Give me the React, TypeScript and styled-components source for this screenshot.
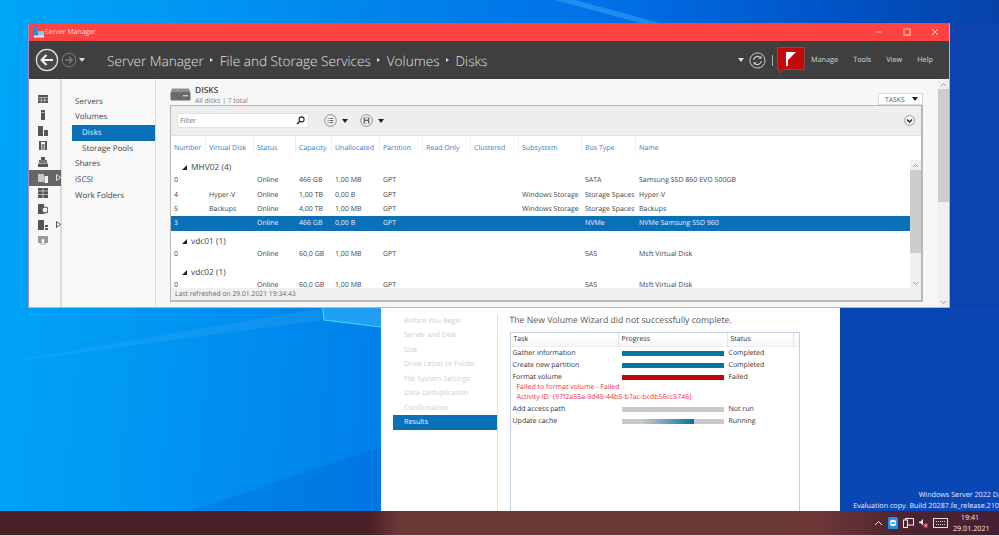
import React from "react";
import styled, { createGlobalStyle } from "styled-components";

const Global = createGlobalStyle`
  html, body { margin: 0; padding: 0; height: 100%; overflow: hidden; }
  #root { height: 100%; }
  * { box-sizing: border-box; text-rendering: geometricPrecision; }
`;

const Desktop = styled.div`
  position: relative;
  width: 999px;
  height: 536px;
  overflow: hidden;
  display: flex;
  flex-direction: column;
  font-family: "Open Sans", Roboto, sans-serif;
  font-size: 7.2px;
  color: #3c3c3c;
  background: linear-gradient(96deg, #00a6f7 0%, #0095f2 20%, #0082ea 38%, #0070e8 58%, #0052c4 80%, #0a3c9e 100%);
`;

const Wallpaper = styled.svg`
  position: absolute;
  left: 0;
  top: 0;
`;

const Spacer = styled.div`
  flex: 1;
`;

const Taskbar = styled.footer`
  height: 25px;
  background: linear-gradient(90deg, #4a2129 0%, #4a2029 37%, #6b3838 40%, #6e3838 82%, #4d2430 90%, #452033 100%);
  display: flex;
  align-items: center;
  justify-content: flex-end;
  position: relative;
  z-index: 2;
  border-bottom: 1px solid #d8d8d8;
`;

const Tray = styled.div`
  display: flex;
  align-items: center;
  gap: 5px;
  margin-right: 12px;
  color: #fff;
`;

const Clock = styled.div`
  width: 34px;
  padding-top: 1px;
  text-align: center;
  font-size: 7.2px;
  line-height: 11px;
  color: #f4eeee;
`;

const Watermark = styled.div`
  position: absolute;
  right: -31px;
  top: 490px;
  color: #e8f0ff;
  font-size: 7.2px;
  line-height: 11px;
  white-space: nowrap;
  text-align: right;
`;

const WizardWindow = styled.section`
  position: absolute;
  left: 381px;
  top: 308px;
  width: 459px;
  height: 203px;
  background: #fff;
  display: flex;
  padding: 6px 0 0 12px;
`;

const WizardNav = styled.nav`
  width: 105px;
  height: 197px;
  border-right: 1px solid #e2e2e2;
  display: flex;
  flex-direction: column;
`;

const WizardStep = styled.div<{ $active?: boolean }>`
  height: 14.45px;
  flex: none;
  line-height: 15.6px;
  padding-left: 11px;
  font-size: 7.2px;
  white-space: nowrap;
  color: ${(p) => (p.$active ? "#e8f2fa" : "#cfcfcf")};
  background: ${(p) => (p.$active ? "#0a70b8" : "transparent")};
`;

const WizardMain = styled.div`
  flex: 1;
  padding-left: 11.5px;
`;

const WizardTitle = styled.h2`
  margin: 0;
  font-weight: 400;
  font-size: 8.7px;
  line-height: 12px;
  color: #555;
  white-space: nowrap;
`;

const TaskTable = styled.div`
  margin-top: 6px;
  width: 290px;
  height: 179px;
  border: 1px solid #c4d2df;
  border-bottom: none;
  background: #fff;
`;

const TaskRow = styled.div`
  display: grid;
  grid-template-columns: 111px 107px 1fr;
  grid-template-rows: 12px;
  height: 12px;
  align-items: center;
  font-size: 7px;
  color: #333;
  white-space: nowrap;
`;

const TaskHeadRow = styled.div`
  display: grid;
  grid-template-columns: 108px 109px 66px 1fr;
  height: 14px;
  line-height: 14px;
  font-size: 7px;
  color: #333;
  border-bottom: 1px solid #eee;
  background: linear-gradient(#fff, #f8f8f8);
`;

const TaskHeadCell = styled.div`
  padding-left: 3px;
  height: 100%;
  border-right: 1px solid #e4e4e4;
  &:last-child { border-right: 0; }
`;

const TaskCell = styled.div`
  padding: 2px 0 0 2px;
  line-height: 12px;
`;

const TaskStatus = styled.div`
  padding-top: 2px;
  line-height: 12px;
`;

const ErrorLine = styled.div`
  padding-left: 6px;
  height: 10px;
  line-height: 10px;
  color: #f0304a;
  font-size: 7px;
  white-space: nowrap;
`;

const Bar = styled.div<{ $fill: string }>`
  width: 102px;
  height: 5px;
  background: ${(p) => p.$fill};
`;

const Window = styled.section`
  position: absolute;
  left: 28px;
  top: 23px;
  width: 922px;
  height: 285px;
  display: flex;
  flex-direction: column;
  background: #f7f7f7;
  border: 1px solid #f29a9a;
  border-top: 0;
  border-left-color: #a090c8;
`;

const TitleBar = styled.header`
  height: 18px;
  flex: none;
  background: #ff4242;
  display: flex;
  align-items: center;
  padding-left: 4px;
  gap: 0;
  color: #ffdcdc;
  font-size: 6.9px;
`;

const TitleText = styled.span`
  flex: 1;
`;

const WinButton = styled.div`
  width: 28px;
  height: 18px;
  display: flex;
  align-items: center;
  justify-content: center;
`;

const TopBar = styled.div`
  height: 38px;
  flex: none;
  background: #3f3f3f;
  display: flex;
  align-items: center;
  padding-left: 6px;
`;

const NavCluster = styled.div`
  width: 72px;
  display: flex;
  align-items: center;
  gap: 2px;
`;

const Crumbs = styled.div`
  flex: 1;
  display: flex;
  align-items: center;
  gap: 6.5px;
  font-size: 13.6px;
  font-weight: 300;
  color: #e2e2e2;
  white-space: nowrap;
`;

const CrumbSep = styled.span`
  width: 0;
  height: 0;
  border-left: 3px solid #e2e2e2;
  border-top: 2.5px solid transparent;
  border-bottom: 2.5px solid transparent;
`;

const ToolCluster = styled.div`
  display: flex;
  align-items: center;
`;

const SmallArrow = styled.span<{ $dark?: boolean }>`
  width: 0;
  height: 0;
  flex: none;
  border-left: 3.5px solid transparent;
  border-right: 3.5px solid transparent;
  border-top: 4px solid ${(p) => (p.$dark ? "#222" : "#ddd")};
`;

const ToolGap = styled.span`
  width: 5px;
`;

const VLine = styled.div`
  width: 1px;
  height: 11px;
  background: #aaa;
  margin: 0 4px 0 6px;
`;

const Menu = styled.div`
  display: flex;
  margin-left: 6px;
  gap: 15px;
  padding-right: 16px;
  font-size: 7.3px;
  color: #d6d6d6;
`;

const Body = styled.div`
  flex: 1;
  min-height: 0;
  display: flex;
`;

const Rail = styled.aside`
  width: 33px;
  flex: none;
  border-right: 2px solid #dcdcdc;
  padding-top: 12.5px;
  display: flex;
  flex-direction: column;
`;

const RailItem = styled.div<{ $active?: boolean }>`
  height: 15.7px;
  width: 32px;
  display: flex;
  align-items: center;
  padding-left: 9px;
  gap: 8px;
  background: ${(p) => (p.$active ? "#666" : "transparent")};
`;

const SideNav = styled.nav`
  width: 94px;
  flex: none;
  border-right: 1px solid #dcdcdc;
  padding: 14.5px 0 0 10px;
  background: #f8f8f8;
`;

const SideItem = styled.div<{ $active?: boolean; $sub?: boolean }>`
  height: 15.7px;
  line-height: 15.7px;
  font-size: 8px;
  padding-left: ${(p) => (p.$sub ? "10px" : "3px")};
  color: ${(p) => (p.$active ? "#eaf4fb" : "#444")};
  background: ${(p) => (p.$active ? "#0a70b8" : "transparent")};
  white-space: nowrap;
`;

const Content = styled.main`
  flex: 1;
  min-width: 0;
  padding: 9px 15px 0 14px;
  position: relative;
`;

const OuterScroll = styled.div`
  position: absolute;
  right: 0;
  top: 0;
  bottom: 0;
  width: 11px;
  background: #f0f0f0;
  display: flex;
  flex-direction: column;
  align-items: center;
`;

const ScrollThumb = styled.div<{ $h: number }>`
  width: 100%;
  flex: none;
  height: ${(p) => p.$h}px;
  background: #cdcdcd;
`;

const ScrollEnd = styled.div`
  height: 10px;
  flex: none;
  width: 100%;
  display: flex;
  align-items: center;
  justify-content: center;
`;

const ScrollFill = styled.div`
  flex: 1;
`;

const TileHead = styled.div`
  display: flex;
  align-items: flex-start;
  width: 753px;
  height: 17px;
`;

const TileText = styled.div`
  margin-left: 4px;
  flex: 1;
  margin-top: -2px;
`;

const TileTitle = styled.div`
  font-size: 8.4px;
  line-height: 10px;
  font-weight: 600;
  color: #444;
`;

const TileSub = styled.div`
  font-size: 6.8px;
  line-height: 10px;
  color: #777;
`;

const TasksButton = styled.div`
  width: 45px;
  height: 12px;
  margin-top: 5px;
  border: 1px solid #dadada;
  background: #fff;
  display: flex;
  align-items: center;
  justify-content: space-between;
  padding: 0 4px 0 6px;
  font-size: 6.8px;
  color: #555;
`;

const Panel = styled.div`
  width: 753px;
  height: 197px;
  border: 1px solid #b8b8b8;
  border-bottom-width: 2px;
  border-right-width: 2px;
  background: #fff;
  display: flex;
  flex-direction: column;
`;

const FilterBar = styled.div`
  height: 30px;
  flex: none;
  background: #eeeeee;
  display: flex;
  align-items: center;
  padding: 0 6px 0 6px;
  border-bottom: 1px solid #e0e0e0;
`;

const FilterBox = styled.div`
  width: 132px;
  height: 15px;
  background: #fff;
  border: 1px solid #e2e2e2;
  display: flex;
  align-items: center;
  justify-content: space-between;
  padding: 0 3px 0 2px;
  font-size: 7.2px;
  font-style: italic;
  color: #777;
  margin-right: 15px;
`;

const IconGroup = styled.div`
  display: flex;
  align-items: center;
  gap: 5px;
  margin-right: 12px;
`;

const FilterRest = styled.div`
  flex: 1;
`;

const Grid = styled.div`
  display: grid;
  grid-template-columns: 35px 48px 42px 36px 48px 43px 48px 48px 63px 54px 1fr;
`;

const HeadRow = styled(Grid)`
  height: 18px;
  flex: none;
`;

const HeadCell = styled.div`
  font-size: 7px;
  padding-top: 8px;
  line-height: 10px;
  color: #2f80c4;
  padding-left: 3px;
  white-space: nowrap;
  border-right: 1px solid #f1f1f1;
  &:last-child { border-right: 0; }
`;

const TableArea = styled.div`
  flex: 1;
  min-height: 0;
  display: flex;
  overflow: hidden;
`;

const Rows = styled.div`
  flex: 1;
  min-width: 0;
  overflow: hidden;
`;

const InnerScroll = styled.div`
  width: 11px;
  flex: none;
  margin-top: 6px;
  background: #f0f0f0;
  display: flex;
  flex-direction: column;
`;

const GroupRow = styled.div<{ $first?: boolean }>`
  height: ${(p) => (p.$first ? "19.3px" : "16.5px")};
  padding: ${(p) => (p.$first ? "7.2px" : "4.5px")} 0 0 11px;
  display: flex;
  align-items: center;
  gap: 4px;
  font-size: 8.4px;
  color: #444;
`;

const GroupArrow = styled.span`
  width: 0;
  height: 0;
  border-bottom: 5px solid #222;
  border-left: 5px solid transparent;
`;

const DataRow = styled(Grid)<{ $selected?: boolean }>`
  height: 14.4px;
  line-height: 15.6px;
  font-size: 7px;
  white-space: nowrap;
  color: ${(p) => (p.$selected ? "#e4f0fa" : "#444")};
  background: ${(p) => (p.$selected ? "#0a70b8" : "transparent")};
`;

const DataCell = styled.div`
  padding-left: 3px;
`;

const StatusFoot = styled.div`
  height: 12px;
  flex: none;
  background: #f0f0f0;
  padding-left: 4px;
  font-size: 6.8px;
  line-height: 12px;
  color: #666;
`;

const ArrowUp = ({ c = "#9a9a9a" }: { c?: string }) => (
  <svg width="7" height="5" viewBox="0 0 7 5"><path d="M1 4l2.5-2.5L6 4" fill="none" stroke={c} strokeWidth="1" /></svg>
);
const ArrowDown = ({ c = "#9a9a9a" }: { c?: string }) => (
  <svg width="7" height="5" viewBox="0 0 7 5"><path d="M1 1l2.5 2.5L6 1" fill="none" stroke={c} strokeWidth="1" /></svg>
);

const AppIcon = () => (
  <svg width="12" height="12" viewBox="0 0 12 12">
    <rect x="1" y="0.5" width="4" height="9" fill="#2a8fd8" />
    <rect x="5" y="5" width="6" height="5" fill="#8fc4e8" />
    <rect x="1" y="9.5" width="10" height="2" fill="#d9eefa" />
  </svg>
);

const BackButton = () => (
  <svg width="24" height="24" viewBox="0 0 24 24">
    <circle cx="12" cy="12" r="10.6" fill="#4a4a4a" stroke="#e4e4e4" strokeWidth="1.2" />
    <path d="M18 12H7M11.5 7L6.5 12l5 5" fill="none" stroke="#f2f2f2" strokeWidth="2" />
  </svg>
);
const ForwardButton = () => (
  <svg width="16" height="16" viewBox="0 0 16 16">
    <circle cx="8" cy="8" r="6.8" fill="none" stroke="#7c7c7c" />
    <path d="M4 8h7M8 4.8L11.2 8 8 11.2" fill="none" stroke="#7c7c7c" strokeWidth="1.3" />
  </svg>
);
const RefreshIcon = () => (
  <svg width="17" height="17" viewBox="0 0 17 17">
    <circle cx="8.5" cy="8.5" r="7.6" fill="none" stroke="#cfcfcf" strokeWidth="1" />
    <path d="M4.6 8a4 4 0 0 1 7-2.2M12.4 9a4 4 0 0 1-7 2.2" fill="none" stroke="#cfcfcf" strokeWidth="1.2" />
    <path d="M12.4 3.8v3h-3zM4.6 13.2v-3h3z" fill="#cfcfcf" />
  </svg>
);
const FlagIcon = () => (
  <svg width="28" height="27" viewBox="0 0 28 27">
    <path d="M0.5 0.5h27v22H6l-3 3.5-.8-3.5H.5z" fill="#c20a0a" stroke="#8c4444" />
    <rect x="9" y="5" width="2" height="14" fill="#fff" />
    <path d="M9 5h10L11 13H9z" fill="#fff" />
  </svg>
);

const RailIcon = ({ kind, c = "#555" }: { kind: number; c?: string }) => {
  const p: Record<number, React.ReactNode> = {
    0: <><rect x="0" y="1" width="10" height="8" fill={c} /><path d="M0 3.5h10M3.3 3.5V9M6.6 3.5V9M0 6.2h10" stroke="#ddd" strokeWidth=".6" /></>,
    1: <><rect x="3" y="0" width="4" height="10" fill={c} /><path d="M3 2.5h4" stroke="#ddd" strokeWidth=".6" /></>,
    2: <><rect x="0" y="0" width="5" height="10" fill={c} /><rect x="6" y="4" width="4" height="6" fill={c} /></>,
    3: <><path d="M1 1h2v8H1zM7 1h2v8H7z" fill={c} /><rect x="3.5" y="3" width="3" height="6" fill={c} opacity=".7" /><path d="M1 .5h8" stroke={c} /></>,
    4: <><rect x="3" y="0" width="4" height="3" fill={c} /><rect x="1" y="3" width="8" height="3" fill={c} opacity=".8" /><rect x="0" y="6.5" width="10" height="3.5" fill={c} /></>,
    5: <><rect x="0" y="1" width="6" height="8" fill="#c8c8c8" /><rect x="6.5" y="3" width="3.5" height="7" fill="#f2f2f2" /></>,
    6: <><rect x="0" y="0" width="10" height="10" fill={c} /><path d="M5 0v10M0 3h10M0 6.5h10" stroke="#ddd" strokeWidth=".7" /></>,
    7: <><rect x="0" y="0" width="6" height="10" fill={c} /><circle cx="7" cy="6" r="3" fill="#f7f7f7" stroke={c} strokeWidth="1.2" /></>,
    8: <><rect x="0" y="0" width="6" height="10" fill={c} /><rect x="7" y="5" width="3" height="2" fill={c} /><rect x="7" y="8" width="3" height="2" fill={c} /></>,
    9: <><rect x="0" y="0" width="10" height="7" fill="#9a9a9a" /><path d="M5 2.5l2 2.5H6v4H4V5H3z" fill="#fff" /><path d="M2 8h6" stroke="#aaa" /></>,
  };
  return <svg width="10" height="10" viewBox="0 0 10 10">{p[kind]}</svg>;
};

const RailArrow = ({ c }: { c: string }) => (
  <svg width="5" height="7" viewBox="0 0 5 7"><path d="M.5.5L4.5 3.5.5 6.5z" fill="none" stroke={c} /></svg>
);

const DiskIcon = () => (
  <svg width="21" height="13" viewBox="0 0 21 13">
    <path d="M2 .5h17l1.5 4H.5z" fill="#8f8f8f" />
    <rect x=".5" y="4" width="20" height="8.5" rx="1.5" fill="#6a6a6a" />
    <rect x="13" y="7" width="5" height="1.4" fill="#cfcfcf" />
  </svg>
);

const SearchIcon = () => (
  <svg width="9" height="9" viewBox="0 0 9 9">
    <circle cx="5.6" cy="3.4" r="2.5" fill="none" stroke="#222" strokeWidth="1.1" />
    <path d="M3.8 5.2L1 8" stroke="#222" strokeWidth="1.5" />
  </svg>
);
const ListIcon = () => (
  <svg width="13" height="13" viewBox="0 0 13 13">
    <circle cx="6.5" cy="6.5" r="5.8" fill="#f5f5f5" stroke="#8a8a8a" />
    <path d="M3.6 4.4h1M5.6 4.4h3.8M3.6 6.5h1M5.6 6.5h3.8M3.6 8.6h1M5.6 8.6h3.8" stroke="#666" strokeWidth="1" />
  </svg>
);
const SaveIcon = () => (
  <svg width="13" height="13" viewBox="0 0 13 13">
    <circle cx="6.5" cy="6.5" r="5.8" fill="#f5f5f5" stroke="#8a8a8a" />
    <rect x="3.6" y="3.4" width="5.8" height="6.2" fill="#666" />
    <rect x="5" y="3.8" width="3" height="1.8" fill="#eee" />
    <rect x="5" y="7" width="3" height="2.6" fill="#eee" />
  </svg>
);
const ExpandIcon = () => (
  <svg width="11" height="11" viewBox="0 0 11 11">
    <circle cx="5.5" cy="5.5" r="4.9" fill="#f8f8f8" stroke="#9a9a9a" />
    <path d="M3 4.4l2.5 2.5L8 4.4" fill="none" stroke="#222" strokeWidth="1.4" />
  </svg>
);

const columns = ["Number", "Virtual Disk", "Status", "Capacity", "Unallocated", "Partition", "Read Only", "Clustered", "Subsystem", "Bus Type", "Name"];

type Row = string[];
const groups: { name: string; rows: { cells: Row; selected?: boolean }[] }[] = [
  {
    name: "MHV02 (4)",
    rows: [
      { cells: ["0", "", "Online", "466 GB", "1,00 MB", "GPT", "", "", "", "SATA", "Samsung SSD 860 EVO 500GB"] },
      { cells: ["4", "Hyper-V", "Online", "1,00 TB", "0,00 B", "GPT", "", "", "Windows Storage", "Storage Spaces", "Hyper-V"] },
      { cells: ["5", "Backups", "Online", "4,00 TB", "1,00 MB", "GPT", "", "", "Windows Storage", "Storage Spaces", "Backups"] },
      { cells: ["3", "", "Online", "466 GB", "0,00 B", "GPT", "", "", "", "NVMe", "NVMe Samsung SSD 960"], selected: true },
    ],
  },
  { name: "vdc01 (1)", rows: [{ cells: ["0", "", "Online", "60,0 GB", "1,00 MB", "GPT", "", "", "", "SAS", "Msft Virtual Disk"] }] },
  { name: "vdc02 (1)", rows: [{ cells: ["0", "", "Online", "60,0 GB", "1,00 MB", "GPT", "", "", "", "SAS", "Msft Virtual Disk"] }] },
];

const railKinds = [0, 1, 2, 3, 4, 5, 6, 7, 8, 9];
const navItems: { label: string; sub?: boolean; active?: boolean }[] = [
  { label: "Servers" },
  { label: "Volumes" },
  { label: "Disks", sub: true, active: true },
  { label: "Storage Pools", sub: true },
  { label: "Shares" },
  { label: "iSCSI" },
  { label: "Work Folders" },
];
const wizardSteps = ["Before You Begin", "Server and Disk", "Size", "Drive Letter or Folder", "File System Settings", "Data Deduplication", "Confirmation"];

const blue = "#05769c";
const grey = "#c9c9c9";
const running = "linear-gradient(90deg, #c9c9c9 0%, #c9c9c9 20%, #05769c 70%, #05769c 71%, #c9c9c9 71%)";

export default function App() {
  return (
    <Desktop>
      <Global />
      <Wallpaper width="999" height="511" viewBox="0 0 999 511">
        <path d="M0 363 L323 320 L381 327 L381 308 L323 308 Z" fill="#ffffff" opacity="0.06" />
        <path d="M190 511 L381 447 V511 Z" fill="#0050c0" opacity="0.18" />
        <path d="M323 308 L324 320 L381 327" fill="none" stroke="#5ff0ff" strokeWidth="1" opacity=".8" />
        <path d="M324 320 L381 327 V308 H323 Z" fill="#40c8ff" opacity=".35" />
        <path d="M555 0 L640 23 L660 23 L575 0 Z" fill="#5cc0ff" opacity=".35" />
        <rect x="840" y="308" width="159" height="203" fill="#0a46b4" />
        <rect x="950" y="23" width="49" height="285" fill="#0a44ac" />
      </Wallpaper>
      <Spacer />
      <Taskbar>
        <Tray>
          <svg width="9" height="6" viewBox="0 0 9 6"><path d="M1 5l3.5-3.5L8 5" fill="none" stroke="#eee" strokeWidth="1" /></svg>
          <svg width="10" height="12" viewBox="0 0 10 12">
            <rect width="10" height="12" rx="1.5" fill="#1e8fef" />
            <circle cx="5" cy="6" r="3.2" fill="#fff" />
            <path d="M2.6 6h4.8" stroke="#1e8fef" strokeWidth="1.4" />
          </svg>
          <svg width="11" height="10" viewBox="0 0 11 10">
            <rect x="2.5" y=".5" width="8" height="6.5" fill="none" stroke="#eee" />
            <rect x=".5" y="2" width="4" height="7.5" fill="#4a2433" stroke="#eee" />
          </svg>
          <svg width="9" height="10" viewBox="0 0 9 10">
            <path d="M0 3.5h1.5L4 1v6.5L1.5 5H0z" fill="#eee" />
            <rect x="4.5" y="5" width="4.5" height="5" rx="1" fill="#e81123" />
            <path d="M5.6 6.2l2.3 2.6M7.9 6.2L5.6 8.8" stroke="#fff" strokeWidth=".7" />
          </svg>
          <svg width="15" height="10" viewBox="0 0 15 10">
            <rect x=".5" y=".5" width="14" height="9" fill="none" stroke="#ddd" />
            <path d="M3 3.5h9M3 6.5h9" stroke="#ddd" strokeDasharray="1 1" />
          </svg>
          <Clock>19:41<br />29.01.2021</Clock>
        </Tray>
      </Taskbar>

      <Watermark>
        <div>Windows Server 2022 Datacenter</div>
        <div>Evaluation copy. Build 20287.fe_release.210122-1430</div>
      </Watermark>

      <WizardWindow>
        <WizardNav>
          {wizardSteps.map((s) => <WizardStep key={s}>{s}</WizardStep>)}
          <WizardStep $active>Results</WizardStep>
        </WizardNav>
        <WizardMain>
          <WizardTitle>The New Volume Wizard did not successfully complete.</WizardTitle>
          <TaskTable>
            <TaskHeadRow>
              <TaskHeadCell>Task</TaskHeadCell>
              <TaskHeadCell>Progress</TaskHeadCell>
              <TaskHeadCell>Status</TaskHeadCell>
              <TaskHeadCell />
            </TaskHeadRow>
            <TaskRow><TaskCell>Gather information</TaskCell><Bar $fill={blue} /><TaskStatus>Completed</TaskStatus></TaskRow>
            <TaskRow><TaskCell>Create new partition</TaskCell><Bar $fill={blue} /><TaskStatus>Completed</TaskStatus></TaskRow>
            <TaskRow><TaskCell>Format volume</TaskCell><Bar $fill="#c00a0a" /><TaskStatus>Failed</TaskStatus></TaskRow>
            <ErrorLine>Failed to format volume - Failed</ErrorLine>
            <ErrorLine>Activity ID: {"{97f2a55a-9d45-44b5-b7ac-bcdb56cc5746}"}</ErrorLine>
            <TaskRow><TaskCell>Add access path</TaskCell><Bar $fill={grey} /><TaskStatus>Not run</TaskStatus></TaskRow>
            <TaskRow><TaskCell>Update cache</TaskCell><Bar $fill={running} /><TaskStatus>Running</TaskStatus></TaskRow>
          </TaskTable>
        </WizardMain>
      </WizardWindow>

      <Window>
        <TitleBar>
          <AppIcon />
          <TitleText>Server Manager</TitleText>
          <WinButton><svg width="8" height="8" viewBox="0 0 8 8"><path d="M1 4h6" stroke="#ffb4b4" /></svg></WinButton>
          <WinButton><svg width="8" height="8" viewBox="0 0 8 8"><rect x="1" y="1" width="6" height="6" fill="none" stroke="#ffc8c8" /></svg></WinButton>
          <WinButton><svg width="8" height="8" viewBox="0 0 8 8"><path d="M1 1l6 6M7 1L1 7" stroke="#ffd8d8" /></svg></WinButton>
        </TitleBar>
        <TopBar>
          <NavCluster>
            <BackButton />
            <ForwardButton />
            <SmallArrow />
          </NavCluster>
          <Crumbs>
            <span>Server Manager</span><CrumbSep />
            <span>File and Storage Services</span><CrumbSep />
            <span>Volumes</span><CrumbSep />
            <span>Disks</span>
          </Crumbs>
          <ToolCluster>
            <SmallArrow />
            <ToolGap />
            <RefreshIcon />
            <VLine />
            <FlagIcon />
            <Menu>
              <span>Manage</span><span>Tools</span><span>View</span><span>Help</span>
            </Menu>
          </ToolCluster>
        </TopBar>
        <Body>
          <Rail>
            {railKinds.map((k) => (
              <RailItem key={k} $active={k === 5}>
                <RailIcon kind={k} />
                {k === 5 && <RailArrow c="#e0e0e0" />}
                {k === 8 && <RailArrow c="#555" />}
              </RailItem>
            ))}
          </Rail>
          <SideNav>
            {navItems.map((n) => (
              <SideItem key={n.label} $sub={n.sub} $active={n.active}>{n.label}</SideItem>
            ))}
          </SideNav>
          <Content>
            <TileHead>
              <DiskIcon />
              <TileText>
                <TileTitle>DISKS</TileTitle>
                <TileSub>All disks | 7 total</TileSub>
              </TileText>
              <TasksButton>TASKS<SmallArrow $dark /></TasksButton>
            </TileHead>
            <Panel>
              <FilterBar>
                <FilterBox>Filter<SearchIcon /></FilterBox>
                <IconGroup><ListIcon /><SmallArrow $dark /></IconGroup>
                <IconGroup><SaveIcon /><SmallArrow $dark /></IconGroup>
                <FilterRest />
                <ExpandIcon />
              </FilterBar>
              <HeadRow>
                {columns.map((c) => <HeadCell key={c}>{c}</HeadCell>)}
              </HeadRow>
              <TableArea>
                <Rows>
                  {groups.map((g, i) => (
                    <React.Fragment key={g.name}>
                      <GroupRow $first={i === 0}><GroupArrow />{g.name}</GroupRow>
                      {g.rows.map((r, j) => (
                        <DataRow key={j} $selected={r.selected}>
                          {r.cells.map((c, k) => <DataCell key={k}>{c}</DataCell>)}
                        </DataRow>
                      ))}
                    </React.Fragment>
                  ))}
                </Rows>
                <InnerScroll>
                  <ScrollEnd><ArrowUp /></ScrollEnd>
                  <ScrollThumb $h={83} />
                  <ScrollFill />
                  <ScrollEnd><ArrowDown /></ScrollEnd>
                </InnerScroll>
              </TableArea>
              <StatusFoot>Last refreshed on 29.01.2021 19:34:43</StatusFoot>
            </Panel>
            <OuterScroll>
              <ScrollEnd><ArrowUp /></ScrollEnd>
              <ScrollThumb $h={113} />
              <ScrollFill />
              <ScrollEnd><ArrowDown /></ScrollEnd>
            </OuterScroll>
          </Content>
        </Body>
      </Window>
    </Desktop>
  );
}
